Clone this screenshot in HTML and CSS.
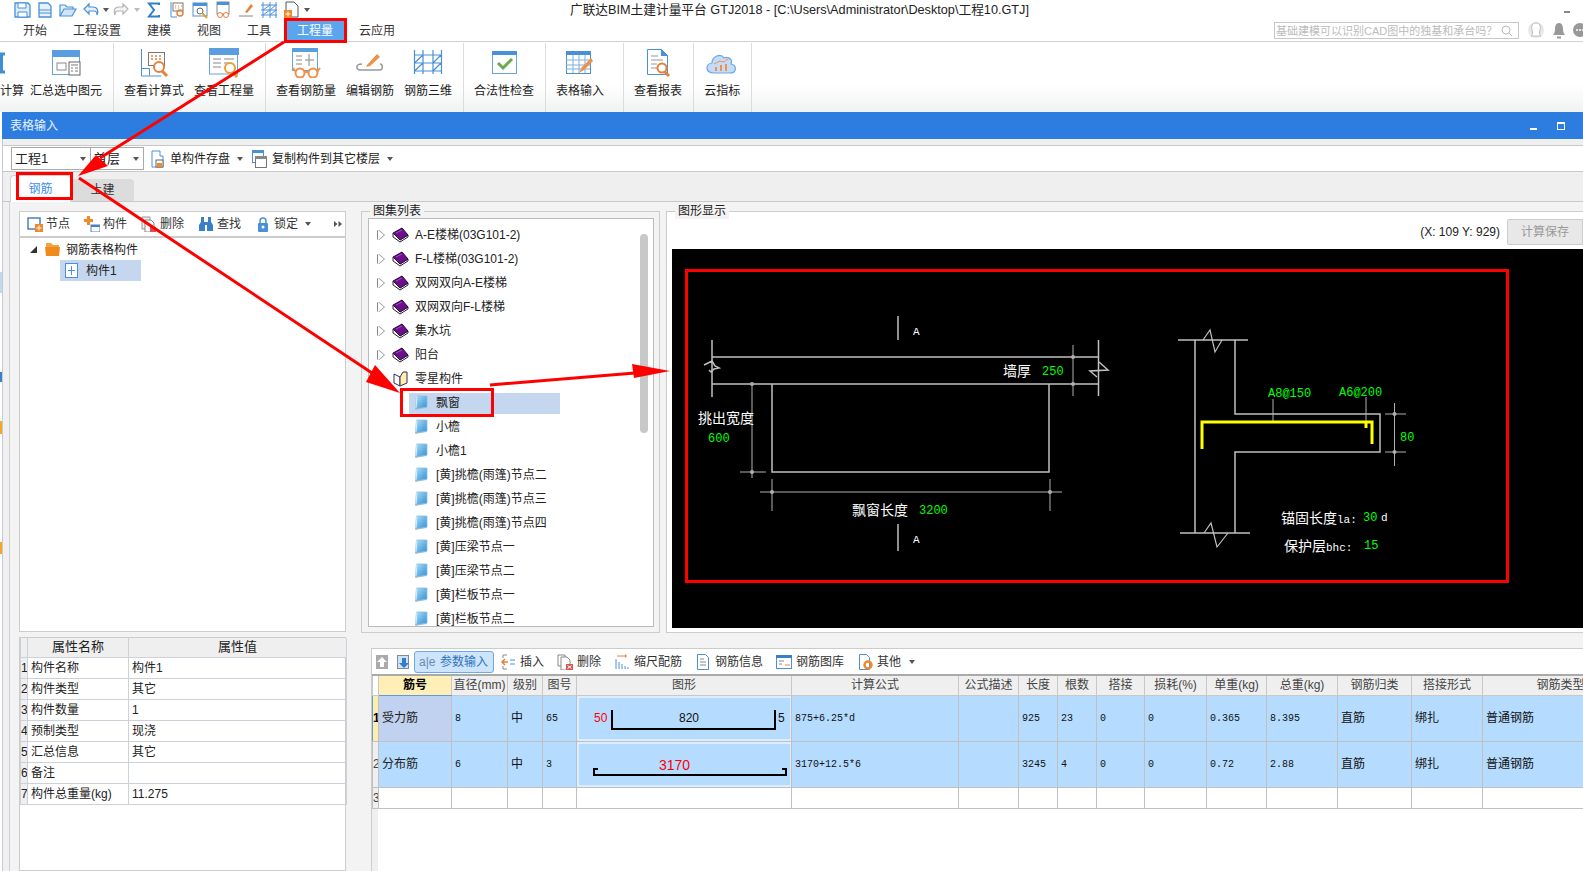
FILE: index.html
```html
<!DOCTYPE html>
<html lang="zh-CN">
<head>
<meta charset="utf-8">
<title>广联达BIM土建计量平台 GTJ2018</title>
<link rel="stylesheet" href="styles.css">
</head>
<body>
<svg class="defs" width="0" height="0" aria-hidden="true">
  <defs>
    <linearGradient id="leafGrad" x1="0" y1="0" x2="1" y2="1"><stop offset="0" stop-color="#a8ddf6"/><stop offset="1" stop-color="#2f8fd8"/></linearGradient>
    <symbol id="book" viewBox="0 0 17 16"><path d="M1 6v4l7 5 8-5V8L8 13z" fill="#fff" stroke="#222"/><path d="M1 6 10 1l6 7-8 5z" fill="#6b0f8c" stroke="#2e0640"/><path d="M4 6 10 3" stroke="#a050c0" fill="none"/></symbol>
    <symbol id="openbook" viewBox="0 0 17 16"><path d="M2 3 8 6v9L2 12z" fill="#fff" stroke="#3a2a55"/><path d="M8 6l3-5h4v11l-7 3z" fill="#fdf0b0" stroke="#3a2a55"/></symbol>
    <symbol id="leaf" viewBox="0 0 14 16"><path d="M1 15 13 13V11L2 13z" fill="#b8c8d0"/><path d="M2.500 1H13v11L1.500 14z" fill="url(#leafGrad)" stroke="#8fbcd8" stroke-width=".8"/><path d="M3 1 2 13" stroke="#d8f0fb" fill="none"/></symbol>
  </defs>
</svg>
<div class="app">
  <header class="topbar">
    <div class="qa-row">
      <div class="qa">
        <svg class="qa-ic" viewBox="0 0 18 18"><path d="M2 2h13l2 2v12H2z" fill="#dcecfa" stroke="#4a90d9" stroke-width="1.3"/><path d="M5 2h8v5H5zM5 11h9v5H5z" fill="#fff" stroke="#4a90d9"/></svg>
        <svg class="qa-ic" viewBox="0 0 18 18"><path d="M3 2h9l3 3v11H3z" fill="#e6f1fb" stroke="#4a90d9" stroke-width="1.3"/><path d="M3 9h12M3 12h12" stroke="#4a90d9"/></svg>
        <svg class="qa-ic" viewBox="0 0 18 18"><path d="M1 15V4h5l2 2h6v2" fill="#e6f1fb" stroke="#4a90d9" stroke-width="1.2"/><path d="M1 15 5 8h12l-4 7z" fill="#cfe4f8" stroke="#4a90d9" stroke-width="1.2"/></svg>
        <svg class="qa-ic" viewBox="0 0 18 18"><path d="M7 3 2 8l5 5v-3h5c2 0 3 1 3 4 2-5 0-8-4-8H7z" fill="#e6f1fb" stroke="#4a90d9" stroke-width="1.2"/></svg>
        <span class="caret qa-caret"></span>
        <svg class="qa-ic qa-near" viewBox="0 0 18 18"><path d="M11 3l5 5-5 5v-3H6c-2 0-3 1-3 4-2-5 0-8 4-8h4z" fill="#f4f4f4" stroke="#b5b5b5" stroke-width="1.2"/></svg>
        <span class="caret qa-caret qa-caret-off"></span>
        <svg class="qa-ic" viewBox="0 0 18 18"><path d="M14 4V2.500H4L9 9l-5 6.500h10V14" fill="none" stroke="#2f7fc8" stroke-width="2"/></svg>
        <svg class="qa-ic" viewBox="0 0 18 18"><path d="M3 1v15h6" fill="none" stroke="#4a90d9"/><rect x="5" y="2" width="10" height="8" fill="#fff" stroke="#777"/><path d="M7 5h1M10 5h1M13 5h1M7 7h1M10 7h1" stroke="#e8803c"/><circle cx="12" cy="12" r="3" fill="none" stroke="#e8803c" stroke-width="1.5"/></svg>
        <svg class="qa-ic" viewBox="0 0 18 18"><rect x="2" y="2" width="14" height="13" fill="#fff" stroke="#5a8fc0"/><path d="M2 3.500h14" stroke="#4a90d9" stroke-width="3"/><circle cx="9" cy="10" r="3" fill="none" stroke="#666"/><path d="M11 12l5 5" stroke="#e8a030" stroke-width="2"/></svg>
        <svg class="qa-ic" viewBox="0 0 18 18"><rect x="3" y="1" width="12" height="12" fill="#fff" stroke="#888"/><path d="M3 2.500h12" stroke="#4a90d9" stroke-width="3"/><circle cx="6" cy="14" r="2.500" fill="#fff" stroke="#e8803c"/><circle cx="12" cy="14" r="2.500" fill="#fff" stroke="#e8803c"/></svg>
        <svg class="qa-ic" viewBox="0 0 18 18"><path d="M8 11 14 3l2 2-6 7z" fill="#e8803c"/><path d="M2 15h14" stroke="#888"/></svg>
        <svg class="qa-ic" viewBox="0 0 18 18"><path d="M3 1v16M10 1v16M16 1v16M1 4h16M1 9h16M1 14h16M3 9l7-5M3 14l7-5M10 9l6-5M10 14l6-5" fill="none" stroke="#4a90d9"/></svg>
        <svg class="qa-ic" viewBox="0 0 18 18"><path d="M3 1h8l4 4v11H3z" fill="#fff" stroke="#555"/><rect x="1" y="9" width="8" height="8" fill="#ef8a2c"/><path d="M5 10.500v5M2.500 13h5" stroke="#fff"/></svg>
        <span class="caret qa-caret"></span>
      </div>
      <div class="app-title">广联达BIM土建计量平台 GTJ2018 - [C:\Users\Administrator\Desktop\工程10.GTJ]</div>
      <span class="app-min"></span>
    </div>
    <div class="menu-row">
      <nav class="menu">
        <span class="menu-item">开始</span>
        <span class="menu-item">工程设置</span>
        <span class="menu-item">建模</span>
        <span class="menu-item">视图</span>
        <span class="menu-item">工具</span>
        <span class="menu-item menu-active">工程量</span>
        <span class="menu-item">云应用</span>
      </nav>
      <div class="search">
        <span>基础建模可以识别CAD图中的独基和承台吗？</span>
        <svg class="search-ic" viewBox="0 0 12 12"><circle cx="5" cy="5" r="4" fill="none" stroke="#bbb"/><path d="M8 8l3 3" stroke="#bbb"/></svg>
      </div>
      <svg class="user-ic" viewBox="0 0 18 20"><circle cx="9" cy="9" r="8" fill="#e9e9e9"/><path d="M9 2c-4 0-5 3-4 7 1 3 1 4-1 6h10c-2-2-2-3-1-6 1-4 0-7-4-7z" fill="#fff" stroke="#bbb"/></svg>
      <svg class="bell-ic" viewBox="0 0 14 18"><path d="M7 1c-3 0-4 3-4 6 0 3-1 5-2 6h12c-1-1-2-3-2-6 0-3-1-6-4-6z" fill="#999"/><rect x="5" y="14.500" width="4" height="2" fill="#999"/></svg>
      <svg class="chat-ic" viewBox="0 0 16 16"><circle cx="8" cy="7" r="7" fill="#999"/><circle cx="5" cy="7" r="1" fill="#fff"/><circle cx="8" cy="7" r="1" fill="#fff"/><circle cx="11" cy="7" r="1" fill="#fff"/></svg>
    </div>
  </header>

  <section class="ribbon">
    <div class="rb-group">
      <div class="rb-item rb-cut">
        <svg class="rb-ic rb-ic-cut" viewBox="0 0 32 30"><path d="M9 6H5.500v18H9" fill="none" stroke="#3f8fd8" stroke-width="3"/></svg>
        <span class="rb-label">计算</span>
      </div>
      <div class="rb-item">
        <svg class="rb-ic" viewBox="0 0 32 30"><rect x="2.500" y="2.500" width="27" height="24" fill="#fff" stroke="#6aa3dc"/><rect x="2" y="2" width="28" height="7" fill="#5b9ee0"/><rect x="7" y="15" width="9" height="7" fill="none" stroke="#8a8a8a"/><rect x="19" y="14" width="11" height="13" fill="#fff" stroke="#666"/><path d="M21 17h7M21 20h2M25 20h3M21 23h2M25 23h3" stroke="#777"/></svg>
        <span class="rb-label">汇总选中图元</span>
      </div>
    </div>
    <div class="rb-group">
      <div class="rb-item">
        <svg class="rb-ic" viewBox="0 0 32 30"><path d="M3.500 1v27h20M3.500 20.500h8v7" fill="none" stroke="#4a90d9"/><rect x="10.500" y="4.500" width="16" height="13" fill="#fff" stroke="#777"/><path d="M13 8h2M17 8h2M21 8h2M13 11h2M17 11h2M21 11h2" stroke="#e8803c" stroke-width="1.500"/><circle cx="21" cy="19" r="5" fill="#fff" stroke="#e8803c" stroke-width="2"/><path d="M24 23l5 5" stroke="#e8803c" stroke-width="3"/></svg>
        <span class="rb-label">查看计算式</span>
      </div>
      <div class="rb-item">
        <svg class="rb-ic" viewBox="0 0 32 30"><rect x="1.500" y="1" width="28" height="25" fill="#fff" stroke="#6aa3dc"/><rect x="1" y="0" width="30" height="7" fill="#5b9ee0"/><path d="M5 11h8M5 15h8M5 19h8M16 11h10M16 15h4" stroke="#888"/><circle cx="22" cy="20" r="5" fill="#fff" stroke="#e8a030" stroke-width="2"/><path d="M25 24l4 5" stroke="#e8a030" stroke-width="3"/></svg>
        <span class="rb-label">查看工程量</span>
      </div>
    </div>
    <div class="rb-group">
      <div class="rb-item">
        <svg class="rb-ic" viewBox="0 0 32 30"><rect x="2.500" y="0.500" width="25" height="22" fill="#fff" stroke="#6aa3dc"/><rect x="2" y="0" width="26" height="4" fill="#5b9ee0"/><path d="M6 8h6M6 12h6M6 16h6M19 6v12M15 12h9" stroke="#888" fill="none"/><circle cx="10" cy="25" r="4.500" fill="#fff" stroke="#f0904a" stroke-width="2"/><circle cx="23" cy="25" r="4.500" fill="#fff" stroke="#f0904a" stroke-width="2"/><path d="M14 24h5M6 24 3 20M27 24l3-4" stroke="#f0904a" stroke-width="2"/></svg>
        <span class="rb-label">查看钢筋量</span>
      </div>
      <div class="rb-item">
        <svg class="rb-ic" viewBox="0 0 32 30"><path d="M8 16c-7 0-6 6-2 6h20c3 0 3-6 0-6" fill="none" stroke="#999" stroke-width="1.500"/><path d="M13 17l10-11 3 3-10 9-4 1z" fill="#f0904a"/></svg>
        <span class="rb-label">编辑钢筋</span>
      </div>
      <div class="rb-item">
        <svg class="rb-ic" viewBox="0 0 32 30"><path d="M2.500 2v24M29.500 2v24M11 2v24M21 2v24M2 7h28M2 15h28M2 23h28M2.500 15 11 7M21 15l8-8M2.500 23 11 15M21 23l8-8" fill="none" stroke="#4a90d9" stroke-width="1.200"/></svg>
        <span class="rb-label">钢筋三维</span>
      </div>
    </div>
    <div class="rb-group">
      <div class="rb-item">
        <svg class="rb-ic" viewBox="0 0 32 30"><rect x="4.500" y="3.500" width="24" height="22" fill="#fff" stroke="#6aa3dc"/><rect x="4" y="3" width="25" height="4" fill="#4a90d9"/><path d="M10 15l5 5 9-9" fill="none" stroke="#6aa84f" stroke-width="3"/></svg>
        <span class="rb-label">合法性检查</span>
      </div>
    </div>
    <div class="rb-group rb-group-wide">
      <div class="rb-item">
        <svg class="rb-ic" viewBox="0 0 32 30"><rect x="2.500" y="3.500" width="24" height="22" fill="#fff" stroke="#4a90d9"/><rect x="2" y="3" width="25" height="4" fill="#4a90d9"/><path d="M2 12h24M2 17h24M2 21h24M9 7v18M15 7v18M21 7v18" stroke="#7fb0e0"/><path d="M15 25l3-6 9-9 2 3-9 9z" fill="#f0904a"/></svg>
        <span class="rb-label">表格输入</span>
      </div>
    </div>
    <div class="rb-group">
      <div class="rb-item">
        <svg class="rb-ic" viewBox="0 0 32 30"><path d="M5.500 1.500h14l6 6v19h-20z" fill="#fff" stroke="#4a90d9"/><path d="M19 1l7 7h-7z" fill="#4a90d9"/><path d="M9 8h7M9 12h12M9 16h6M9 20h6" stroke="#999"/><circle cx="20" cy="20" r="4.500" fill="#fff" stroke="#e8803c" stroke-width="2"/><path d="M23 24l4 4" stroke="#e8803c" stroke-width="3"/></svg>
        <span class="rb-label">查看报表</span>
      </div>
    </div>
    <div class="rb-group">
      <div class="rb-item">
        <svg class="rb-ic" viewBox="0 0 32 30"><path d="M8 25c-9 0-9-9-2-10 0-7 9-10 12-5 5-2 9 2 7 6 6 1 6 9-1 9z" fill="#c4dcf6" stroke="#6aa8e8" stroke-width="1.200"/><path d="M10 23v-4M15 23v-6M20 23v-7" stroke="#f0904a" stroke-width="2"/><path d="M8 16l6-3 4 1 5-4" fill="none" stroke="#f0904a"/></svg>
        <span class="rb-label">云指标</span>
      </div>
    </div>
  </section>

  <div class="desk">
    <div class="strip"><i class="bit bit-a"></i><i class="bit bit-b"></i><i class="bit bit-c"></i><i class="bit bit-d"></i></div>
    <main class="window">
      <div class="win-title">
        <span>表格输入</span>
        <div class="win-btns"><i class="wb-min"></i><i class="wb-max"></i><i class="wb-close"></i></div>
      </div>
      <div class="win-gap"></div>
      <div class="toolbar">
        <div class="combo combo-a"><span>工程1</span><i class="caret"></i></div>
        <div class="combo combo-b"><span>首层</span><i class="caret"></i></div>
        <svg class="tb-ic tb-ic-a" viewBox="0 0 13 18"><path d="M1 1h8v5h3v11H1z" fill="#fff" stroke="#4a90d9"/><rect x="5" y="10" width="7" height="7" fill="#fff" stroke="#666"/><rect x="6" y="13" width="5" height="4" fill="#ef8a2c"/></svg>
        <span class="tb-text">单构件存盘</span><i class="caret tb-caret"></i>
        <svg class="tb-ic tb-ic-b" viewBox="0 0 15 18"><rect x="0.500" y="0.500" width="11" height="12" fill="#fff" stroke="#4a90d9"/><rect x="0" y="0" width="12" height="3" fill="#4a90d9"/><rect x="3.500" y="6.500" width="11" height="11" fill="#fff" stroke="#777"/><rect x="3" y="6" width="12" height="3" fill="#888"/></svg>
        <span class="tb-text">复制构件到其它楼层</span><i class="caret tb-caret"></i>
      </div>
      <div class="tabs">
        <span class="tab tab-on">钢筋</span>
        <span class="tab tab-off">土建</span>
      </div>
      <div class="work">
        <aside class="left">
          <div class="tree-panel">
            <div class="ltool">
              <span class="lt"><svg class="lt-ic" viewBox="0 0 16 16"><rect x="1" y="2" width="12" height="11" fill="#fff" stroke="#4a80c0" stroke-width="1.500"/><rect x="8" y="8" width="8" height="8" fill="#ef8a2c"/><path d="M12 9.500v5M9.500 12h5" stroke="#fff"/></svg>节点</span>
              <span class="lt"><svg class="lt-ic" viewBox="0 0 16 16"><path d="M3 0h3v3h3v3H6v3H3V6H0V3h3z" fill="#ef8a2c"/><rect x="7" y="9" width="9" height="7" fill="#fff" stroke="#4a80c0"/><rect x="7" y="9" width="9" height="2" fill="#4a80c0"/></svg>构件</span>
              <span class="lt"><svg class="lt-ic" viewBox="0 0 16 16"><path d="M1 1h8v12H1z" fill="#eee" stroke="#999"/><path d="M4 4h6l3 3v9H4z" fill="#fff" stroke="#888"/><rect x="9" y="11" width="6" height="5" fill="#d9534f"/></svg>删除</span>
              <span class="lt"><svg class="lt-ic" viewBox="0 0 16 16"><path d="M3 1h3v5h4V1h3v5l2 3v6h-6V9H7v6H1V9l2-3z" fill="#3a7fc8"/></svg>查找</span>
              <span class="lt"><svg class="lt-ic" viewBox="0 0 16 16"><path d="M5 7V5c0-4 6-4 6 0v2" fill="none" stroke="#4a90d9" stroke-width="1.500"/><rect x="3" y="7" width="10" height="9" rx="1" fill="#4a90d9"/><circle cx="8" cy="11" r="1.500" fill="#fff"/></svg>锁定</span>
              <i class="caret lt-caret"></i>
              <svg class="lt-more" viewBox="0 0 8 8"><path d="M0 1l3.500 3L0 7zM4.500 1 8 4 4.500 7z" fill="#555"/></svg>
            </div>
            <div class="tree">
              <div class="tree-row">
                <i class="tri-black"></i>
                <svg class="folder" viewBox="0 0 15 15"><path d="M1 1h5l2 2h6v11H1z" fill="#f5a142"/><path d="M0 5h15l-1 9H1z" fill="#f08a1c"/></svg>
                <span>钢筋表格构件</span>
              </div>
              <div class="tree-child">
                <svg class="node-ic" viewBox="0 0 13 15"><rect x="0.500" y="0.500" width="12" height="14" fill="#fff" stroke="#4a90d9"/><path d="M6.500 3v9M3 7.500h7" stroke="#4a90d9"/></svg>
                <span>构件1</span>
              </div>
            </div>
          </div>
          <div class="props">
            <table class="ptable">
              <colgroup><col class="p0"><col class="p1"><col class="p2"></colgroup>
              <thead><tr><th></th><th>属性名称</th><th>属性值</th></tr></thead>
              <tbody>
                <tr><td class="pi">1</td><td>构件名称</td><td>构件1</td></tr>
                <tr><td class="pi">2</td><td>构件类型</td><td>其它</td></tr>
                <tr><td class="pi">3</td><td>构件数量</td><td>1</td></tr>
                <tr><td class="pi">4</td><td>预制类型</td><td>现浇</td></tr>
                <tr><td class="pi">5</td><td>汇总信息</td><td>其它</td></tr>
                <tr><td class="pi">6</td><td>备注</td><td></td></tr>
                <tr><td class="pi">7</td><td>构件总重量(kg)</td><td>11.275</td></tr>
              </tbody>
            </table>
          </div>
        </aside>
        <div class="right">
          <div class="upper">
            <section class="group group-list">
              <span class="legend">图集列表</span>
              <div class="list">
                <div class="row"><i class="tri"></i><svg class="bk"><use href="#book"/></svg><span>A-E楼梯(03G101-2)</span></div>
                <div class="row"><i class="tri"></i><svg class="bk"><use href="#book"/></svg><span>F-L楼梯(03G101-2)</span></div>
                <div class="row"><i class="tri"></i><svg class="bk"><use href="#book"/></svg><span>双网双向A-E楼梯</span></div>
                <div class="row"><i class="tri"></i><svg class="bk"><use href="#book"/></svg><span>双网双向F-L楼梯</span></div>
                <div class="row"><i class="tri"></i><svg class="bk"><use href="#book"/></svg><span>集水坑</span></div>
                <div class="row"><i class="tri"></i><svg class="bk"><use href="#book"/></svg><span>阳台</span></div>
                <div class="row"><i class="tri tri-hide"></i><svg class="bk"><use href="#openbook"/></svg><span>零星构件</span></div>
                <div class="row"><div class="leaf leaf-on"><svg class="lf"><use href="#leaf"/></svg><span>飘窗</span></div></div>
                <div class="row"><div class="leaf"><svg class="lf"><use href="#leaf"/></svg><span>小檐</span></div></div>
                <div class="row"><div class="leaf"><svg class="lf"><use href="#leaf"/></svg><span>小檐1</span></div></div>
                <div class="row"><div class="leaf"><svg class="lf"><use href="#leaf"/></svg><span>[黄]挑檐(雨篷)节点二</span></div></div>
                <div class="row"><div class="leaf"><svg class="lf"><use href="#leaf"/></svg><span>[黄]挑檐(雨篷)节点三</span></div></div>
                <div class="row"><div class="leaf"><svg class="lf"><use href="#leaf"/></svg><span>[黄]挑檐(雨篷)节点四</span></div></div>
                <div class="row"><div class="leaf"><svg class="lf"><use href="#leaf"/></svg><span>[黄]压梁节点一</span></div></div>
                <div class="row"><div class="leaf"><svg class="lf"><use href="#leaf"/></svg><span>[黄]压梁节点二</span></div></div>
                <div class="row"><div class="leaf"><svg class="lf"><use href="#leaf"/></svg><span>[黄]栏板节点一</span></div></div>
                <div class="row"><div class="leaf"><svg class="lf"><use href="#leaf"/></svg><span>[黄]栏板节点二</span></div></div>
                <i class="scroll"></i>
              </div>
            </section>
            <section class="group group-graph">
              <span class="legend">图形显示</span>
              <div class="coords">
                <span>(X: 109 Y: 929)</span>
                <span class="calc-btn">计算保存</span>
              </div>
              <svg class="canvas" viewBox="672 249 911 379" width="911" height="379">
                <g fill="none" stroke="#c0c0c0" stroke-width="1.500">
                  <path d="M898 316v24M898 524v27M712 340v57M1098.500 340v56M712 357h387M712 384h387M772 384v88h277v-88"/>
                  <path d="M704 365l8-4 3 5 4 2-5 1-3 3-2-2M1099 362l9 8-18 1 7 6"/>
                  <path d="M1178 340h70M1180 533h70M1195 340v193M1235 340v74h145v38h-145v81"/>
                  <path d="M1203 340l7-10 5 22 7-12M1204 533l7-10 6 24 11-14" stroke-width="1.200"/>
                </g>
                <g fill="none" stroke="#b0b0b0">
                  <path d="M1073 345v51M752 384v94M740 472h26M760 492h302M772 479v32M1050 479v32M1394.500 403v63M1385 414h21M1385 452h21M1273 399v23M1366 397v25"/>
                </g>
                <g fill="#b0b0b0">
                  <circle cx="1073" cy="357" r="2"/><circle cx="1073" cy="384" r="2"/><circle cx="752" cy="384" r="2"/><circle cx="752" cy="472" r="2"/><circle cx="772" cy="492" r="2"/><circle cx="1050" cy="492" r="2"/><circle cx="1394.500" cy="414" r="2"/><circle cx="1394.500" cy="452" r="2"/>
                </g>
                <path d="M1202 449v-27h170v22M1366 422v6" fill="none" stroke="#ffff00" stroke-width="3"/>
                <g class="cad-w">
                  <text x="913" y="335">A</text><text x="913" y="543">A</text>
                  <text class="cad-cn" x="1003" y="376">墙厚</text>
                  <text class="cad-cn" x="698" y="423">挑出宽度</text>
                  <text class="cad-cn" x="852" y="515">飘窗长度</text>
                  <text class="cad-cn" x="1281" y="523">锚固长度<tspan class="cad-la">la:</tspan></text>
                  <text class="cad-cn" x="1284" y="551">保护层<tspan class="cad-la">bhc:</tspan></text>
                  <text x="1381" y="521">d</text>
                </g>
                <g class="cad-g">
                  <text x="1042" y="375">250</text><text x="708" y="442">600</text><text x="919" y="514">3200</text>
                  <text x="1268" y="397">A8@150</text><text x="1339" y="396">A6@200</text><text x="1400" y="441">80</text>
                  <text x="1363" y="521">30</text><text x="1364" y="549">15</text>
                </g>
              </svg>
            </section>
          </div>
          <section class="bottom">
            <div class="btool">
              <span class="sq sq-off"><svg viewBox="0 0 12 14"><path d="M6 2 1 7h3v5h4V7h3z" fill="#fff"/></svg></span>
              <span class="sq sq-on"><svg viewBox="0 0 12 14"><path d="M6 12 1 7h3V2h4v5h3z" fill="#2f7fd0"/></svg></span>
              <span class="param"><span class="param-ic">a|e</span>参数输入</span>
              <span class="bt bt-first"><svg class="bt-ic" viewBox="0 0 16 16"><path d="M3 1h4M3 15h4M3 1v3M3 12v3" stroke="#888" fill="none"/><path d="M8 8H2m3-3L2 8l3 3" fill="none" stroke="#e8803c" stroke-width="1.500"/><path d="M10 6h5M10 10h5" stroke="#4a90d9"/></svg>插入</span>
              <span class="bt"><svg class="bt-ic" viewBox="0 0 16 16"><path d="M1 1h7v11H1z" fill="#fff" stroke="#888"/><path d="M4 3h6l3 3v10H4z" fill="#fff" stroke="#888"/><rect x="9" y="10" width="7" height="6" fill="#d9534f"/><path d="M10.500 11.500l4 3m0-3l-4 3" stroke="#fff"/></svg>删除</span>
              <span class="bt"><svg class="bt-ic" viewBox="0 0 16 16"><path d="M3 2h9" stroke="#e8803c"/><path d="M11 0l2 2-2 2z" fill="#e8803c"/><path d="M2 5v10M5 8v7M8 10v5M11 12v3M14 13v2" stroke="#4a90d9"/></svg>缩尺配筋</span>
              <span class="bt"><svg class="bt-ic" viewBox="0 0 16 16"><path d="M2.500 .5h8l3 3v12h-11z" fill="#fff" stroke="#4a90d9"/><path d="M5 5h4M5 8h6M5 11h6" stroke="#888"/></svg>钢筋信息</span>
              <span class="bt"><svg class="bt-ic" viewBox="0 0 16 16"><rect x="0.500" y="1.500" width="15" height="13" fill="#fff" stroke="#4a90d9"/><rect x="0" y="1" width="16" height="3" fill="#3a7fc8"/><path d="M3 7h5M3 10h3" stroke="#888"/><path d="M9 11h5" stroke="#e8803c"/></svg>钢筋图库</span>
              <span class="bt"><svg class="bt-ic" viewBox="0 0 16 16"><path d="M2.500 .5h7l3 3v12h-10z" fill="#fff" stroke="#4a90d9"/><circle cx="11" cy="11" r="3.500" fill="none" stroke="#ef8a2c" stroke-width="2.500"/></svg>其他</span>
              <i class="caret bt-caret"></i>
            </div>
            <div class="grid-wrap">
              <table class="grid">
                <colgroup><col class="c0"><col class="c1"><col class="c2"><col class="c3"><col class="c4"><col class="c5"><col class="c6"><col class="c7"><col class="c8"><col class="c9"><col class="c10"><col class="c11"><col class="c12"><col class="c13"><col class="c14"><col class="c15"><col class="c16"></colgroup>
                <thead>
                  <tr>
                    <th class="corner"></th><th class="th-on">筋号</th><th>直径(mm)</th><th>级别</th><th>图号</th><th>图形</th><th>计算公式</th><th>公式描述</th><th>长度</th><th>根数</th><th>搭接</th><th>损耗(%)</th><th>单重(kg)</th><th>总重(kg)</th><th>钢筋归类</th><th>搭接形式</th><th>钢筋类型</th>
                  </tr>
                </thead>
                <tbody>
                  <tr class="tall">
                    <td class="idx idx-on">1</td><td class="name name-on">受力筋</td><td class="num">8</td><td class="cn">中</td><td class="num">65</td>
                    <td class="shape"><svg class="shape-svg" viewBox="0 0 215 45" width="215" height="45"><rect x="1" y="1" width="213" height="43" fill="none" stroke="#fff"/><path d="M35 14v19h163V14" fill="none" stroke="#000" stroke-width="2"/><text class="sh-r" x="17" y="26">50</text><text class="sh-k" x="102" y="26">820</text><text class="sh-k" x="201" y="26">5</text></svg></td>
                    <td class="num">875+6.25*d</td><td></td><td class="num">925</td><td class="num">23</td><td class="num">0</td><td class="num">0</td><td class="num">0.365</td><td class="num">8.395</td><td class="cn">直筋</td><td class="cn">绑扎</td><td class="cn">普通钢筋</td>
                  </tr>
                  <tr class="tall">
                    <td class="idx">2</td><td class="name">分布筋</td><td class="num">6</td><td class="cn">中</td><td class="num">3</td>
                    <td class="shape"><svg class="shape-svg" viewBox="0 0 215 45" width="215" height="45"><rect x="1" y="1" width="213" height="43" fill="none" stroke="#fff"/><path d="M21 27h-4v6h192v-6h-4" fill="none" stroke="#000" stroke-width="2"/><text class="sh-r sh-big" x="82" y="28">3170</text></svg></td>
                    <td class="num">3170+12.5*6</td><td></td><td class="num">3245</td><td class="num">4</td><td class="num">0</td><td class="num">0</td><td class="num">0.72</td><td class="num">2.88</td><td class="cn">直筋</td><td class="cn">绑扎</td><td class="cn">普通钢筋</td>
                  </tr>
                  <tr class="blank">
                    <td class="idx">3</td><td></td><td></td><td></td><td></td><td></td><td></td><td></td><td></td><td></td><td></td><td></td><td></td><td></td><td></td><td></td><td></td>
                  </tr>
                </tbody>
              </table>
            </div>
          </section>
        </div>
      </div>
    </main>
  </div>

  <svg class="overlay" viewBox="0 0 1583 871" width="1583" height="871" aria-hidden="true">
    <g fill="none" stroke="#ff0000" stroke-width="3">
      <rect x="285.500" y="19.500" width="60" height="22"/>
      <rect x="17.500" y="173.500" width="54" height="25"/>
      <rect x="401.500" y="389.500" width="91" height="26"/>
      <rect x="686.500" y="270.500" width="821" height="311"/>
      <path d="M284 42 100 158M79 178 375 375M490 385l145-12"/>
    </g>
    <g fill="#ff0000">
      <path d="M78 176 96 155 108 166z"/>
      <path d="M400 393 375 365 366 382z"/>
      <path d="M670 371 632 364 634 378z"/>
    </g>
  </svg>
</div>
</body>
</html>
```

FILE: styles.css
```css
* { box-sizing: border-box; }
html, body { margin: 0; padding: 0; height: 100%; overflow: hidden; background: #fff; }
.defs { position: absolute; }
.app {
  position: relative; width: 1583px; height: 871px; overflow: hidden;
  display: flex; flex-direction: column;
  font: 12px/16px "Liberation Sans", "Noto Sans CJK SC", sans-serif; color: #222;
}
.caret { display: inline-block; width: 0; height: 0; border: 3px solid transparent; border-top: 4px solid #555; border-bottom: 0; }

/* top */
.topbar { height: 42px; border-bottom: 1px solid #d0d0d0; flex: none; }
.qa-row { height: 20px; display: flex; align-items: center; }
.qa { width: 570px; flex: none; padding-left: 13px; display: flex; align-items: center; gap: 5px; }
.qa-ic { width: 18px; height: 18px; flex: none; }
.qa-caret { margin-left: -2px; width: 6px; }
.qa-near { margin-left: -2px; }
.qa-caret-off { border-top-color: #bbb; margin-left: -1px; }
.app-title { white-space: nowrap; font-size: 12.7px; }
.app-min { width: 6px; height: 2px; background: #888; margin: 4px 13px 0 auto; }
.menu-row { height: 21px; display: flex; align-items: center; }
.menu { display: flex; flex: none; padding-left: 10px; height: 21px; }
.menu-item { flex: none; white-space: nowrap; padding: 3px 13px 0; height: 21px; color: #333; }
.menu-active { background: #5ba5ee; color: #fff; }
.search {
  margin-left: auto; width: 245px; height: 17px; border: 1px solid #c8c8c8; flex: none;
  display: flex; align-items: center; padding-left: 1px;
  font-size: 11px; color: #bbb; white-space: nowrap;
}
.search-ic { width: 12px; height: 12px; margin-left: auto; margin-right: 5px; flex: none; }
.user-ic { width: 18px; height: 20px; margin-left: 8px; flex: none; }
.bell-ic { width: 14px; height: 18px; margin-left: 7px; flex: none; }
.chat-ic { width: 16px; height: 16px; margin-left: 6px; margin-right: -5px; flex: none; }

/* ribbon */
.ribbon { height: 70px; display: flex; flex: none; background: linear-gradient(#fff 60%, #f1f3f2); }
.rb-group { display: flex; gap: 10px; padding: 5px 11px 0 10px; border-right: 1px solid #dcdcdc; margin-top: 1px; }
.rb-group:first-child { padding-left: 0; width: 114px; }
.rb-group-wide { padding-right: 19px; }
.rb-item { display: flex; flex-direction: column; align-items: center; }
.rb-cut { width: 24px; margin-right: -4px; }
.rb-ic { width: 32px; height: 30px; flex: none; }
.rb-ic-cut { margin: 0 -4px; }
.rb-label { margin-top: 5px; white-space: nowrap; color: #222; }

/* window */
.desk { flex: 1; display: flex; min-height: 0; }
.strip { width: 2px; position: relative; flex: none; background: #fff; }
.bit { position: absolute; left: 0; width: 2px; }
.bit-a { top: 160px; height: 21px; background: #c5d7ef; }
.bit-b { top: 260px; height: 10px; background: #3a7fc8; }
.bit-c { top: 309px; height: 13px; background: #f5a623; }
.bit-d { top: 430px; height: 12px; background: #f5a623; }
.window { flex: 1; display: flex; flex-direction: column; min-width: 0; background: #f0f0f0; border-left: 1px solid #c4cad4; }
.win-title { height: 27px; flex: none; background: #2d7de0; color: #e8f2ff; display: flex; align-items: center; margin-left: -1px; padding-left: 8px; }
.win-btns { margin-left: auto; display: flex; align-items: center; gap: 20px; margin-right: -8px; flex: none; }
.wb-min { width: 7px; height: 2px; background: #fff; margin-top: 6px; }
.wb-max { width: 8px; height: 8px; border: 1px solid #fff; border-top-width: 2px; }
.wb-close { width: 8px; height: 8px; margin-left: -2px; border-left: 2px solid #fff; }
.win-gap { height: 6px; flex: none; background: #efefef; }
.toolbar { height: 27px; flex: none; background: #fff; border-top: 1px solid #c8c8c8; border-bottom: 1px solid #c8c8c8; display: flex; align-items: center; padding-left: 8px; }
.combo { height: 23px; border: 1px solid #aaa; display: flex; align-items: center; justify-content: space-between; padding: 0 4px 0 3px; font-size: 13px; }
.combo-a { width: 80px; }
.combo-b { width: 54px; margin-left: -1px; }
.tb-ic { flex: none; }
.tb-ic-a { width: 13px; height: 18px; margin-left: 7px; margin-right: 6px; }
.tb-ic-b { width: 15px; height: 18px; margin-left: 9px; margin-right: 5px; }
.tb-text { white-space: nowrap; }
.tb-caret { margin-left: 7px; }
.tabs { height: 30px; flex: none; background: #efefef; border-bottom: 1px solid #c8c8c8; display: flex; align-items: flex-end; padding-left: 7px; }
.tab { display: flex; align-items: center; justify-content: center; }
.tab-on { width: 61px; height: 27px; background: #fff; color: #3d8ee8; border: 1px solid #d0d0d0; border-bottom: 0; border-radius: 4px 4px 0 0; margin-bottom: -1px; }
.tab-off { width: 63px; height: 22px; background: #dcdcdc; color: #333; border-radius: 0 4px 0 0; }

.work { flex: 1; min-height: 0; display: flex; padding: 9px 0 0 9px; background: #f3f3f3; border-left: 1px solid #d0d0d0; margin-left: 6px; }

/* left */
.left { width: 327px; flex: none; margin-right: 15px; display: flex; flex-direction: column; }
.tree-panel { height: 421px; flex: none; background: #fff; border: 1px solid #ccc; margin-bottom: 5px; }
.ltool { height: 26px; border-bottom: 2px solid #ccc; display: flex; align-items: center; padding-left: 7px; background: #fff; }
.lt { display: flex; align-items: center; gap: 3px; margin-right: 14px; color: #333; white-space: nowrap; }
.lt-ic { width: 16px; height: 16px; flex: none; }
.lt-caret { margin-left: -7px; }
.lt-more { margin-left: auto; margin-right: 3px; width: 8px; height: 8px; flex: none; }
.tree-row { height: 21px; display: flex; align-items: center; margin-top: 1px; }
.tri-black { width: 0; height: 0; margin-left: 10px; border-left: 7px solid transparent; border-bottom: 7px solid #333; }
.folder { width: 15px; height: 15px; margin-left: 8px; flex: none; }
.tree-row span { margin-left: 6px; }
.tree-child { margin-left: 40px; width: 81px; height: 21px; background: #c5d7ef; display: flex; align-items: center; padding-left: 5px; }
.node-ic { width: 13px; height: 15px; flex: none; }
.tree-child span { margin-left: 8px; }
.props { flex: 1; background: #fff; border: 1px solid #ccc; }
.ptable { border-collapse: collapse; table-layout: fixed; width: 326px; }
.p0 { width: 7px; } .p1 { width: 101px; } .p2 { width: 218px; }
.ptable th { height: 19px; padding: 0; font-weight: 400; background: #efefef; border: 1px solid #cdd2da; border-top: 0; color: #222; font-size: 13px; }
.ptable td { height: 21px; padding: 0 3px; border: 1px solid #cdd2da; white-space: nowrap; overflow: hidden; }
.ptable td.pi { padding: 0; background: #efefef; font-size: 12px; text-align: center; }

/* right */
.right { flex: 1; min-width: 0; display: flex; flex-direction: column; }
.upper { height: 422px; flex: none; display: flex; gap: 6px; }
.group { position: relative; border: 1px solid #ccc; background: #fff; }
.legend { position: absolute; top: -9px; left: 8px; background: #f3f3f3; padding: 0 3px; line-height: 16px; color: #222; }
.group-list { width: 299px; flex: none; padding: 6px 5px 5px 6px; background: #f3f3f3; }
.list { position: relative; height: 100%; background: #fff; border: 1px solid #bbb; padding-top: 4px; overflow: hidden; }
.row { height: 24px; display: flex; align-items: center; padding-left: 9px; white-space: nowrap; flex: none; }
.tri { width: 0; height: 0; border-left: 6px solid #fff; border-top: 5px solid transparent; border-bottom: 5px solid transparent; position: relative; flex: none; filter: drop-shadow(1px 0 0 #888) drop-shadow(-1px 0 0 #888); }
.tri-hide { visibility: hidden; }
.bk { width: 17px; height: 16px; margin: 0 6px 0 8px; flex: none; }
.leaf { margin-left: 31px; width: 151px; height: 21px; display: flex; align-items: center; padding-left: 5px; }
.leaf-on { background: #c5d7ef; }
.lf { width: 14px; height: 16px; margin-right: 8px; flex: none; }
.scroll { position: absolute; left: 271px; top: 15px; width: 8px; height: 199px; border-radius: 4px; background: #c8c8c8; }
.group-graph { flex: 1; min-width: 0; border-right: 0; padding-left: 5px; display: flex; flex-direction: column; }
.coords { height: 37px; flex: none; display: flex; align-items: center; justify-content: flex-end; padding-top: 3px; }
.calc-btn { width: 76px; height: 26px; margin-left: 7px; background: #e8e8e8; border: 1px solid #ccc; border-radius: 2px 0 0 2px; color: #999; display: flex; align-items: center; justify-content: center; }
.canvas { display: block; background: #000; flex: none; }
.cad-w text { fill: #fff; font: 11px "Liberation Mono", monospace; }
.cad-w .cad-cn { font: 14px "Liberation Mono", "Noto Sans CJK SC", monospace; }
.cad-w .cad-la { font-size: 11px; }
.cad-g text { fill: #00ff00; font: 12px "Liberation Mono", monospace; }

/* bottom */
.bottom { flex: 1; min-height: 0; margin: 15px 0 0 10px; border: 1px solid #ccc; border-right: 0; border-bottom: 0; display: flex; flex-direction: column; background: #fff; }
.btool { height: 25px; flex: none; display: flex; align-items: center; padding-left: 4px; white-space: nowrap; color: #333; }
.sq { width: 12px; height: 14px; flex: none; display: block; }
.sq svg { display: block; width: 12px; height: 14px; }
.sq-off { background: #aaa; }
.sq-on { background: #cfe3f7; border: 1px solid #888; margin-left: 9px; }
.param { width: 80px; height: 22px; margin-left: 5px; border: 1px solid #6aa9ee; border-radius: 3px; background: #cde4fb; color: #2f75c0; display: flex; align-items: center; padding-left: 4px; }
.param-ic { width: 21px; color: #6a8ab0; font: 12px "Liberation Sans", sans-serif; }
.bt { display: flex; align-items: center; gap: 4px; margin-left: 13px; }
.bt-first { margin-left: 6px; }
.bt-ic { width: 16px; height: 16px; flex: none; }
.bt-caret { margin-left: 8px; }
.grid-wrap { flex: 1; min-height: 0; overflow: hidden; border-top: 2px solid #aaa; background: linear-gradient(90deg, #efefef 6px, #fff 6px); }
.grid { border-collapse: collapse; table-layout: fixed; width: 1266px; }
.c0 { width: 6px; } .c1 { width: 73px; } .c2 { width: 56px; } .c3 { width: 35px; } .c4 { width: 34px; }
.c5 { width: 215px; } .c6 { width: 167px; } .c7 { width: 60px; } .c8 { width: 39px; } .c9 { width: 39px; }
.c10 { width: 48px; } .c11 { width: 62px; } .c12 { width: 60px; } .c13 { width: 71px; } .c14 { width: 74px; }
.c15 { width: 71px; } .c16 { width: 156px; }
.grid th { height: 19px; padding: 0; font-weight: 400; background: #efefef; color: #444; border: 1px solid #c8c8c8; border-top: 0; white-space: nowrap; overflow: hidden; }
.grid .corner { background: #fff; }
.grid .th-on { background: #ffeeb5; color: #000; font-weight: 700; border-bottom: 1px solid #5b9ee0; }
.grid td { padding: 0 3px; border: 1px solid #c0c0c0; white-space: nowrap; overflow: hidden; }
.tall td { height: 46px; background: #b5dcff; }
.blank td { height: 21px; background: #fff; }
.grid td.idx { padding: 0; background: #efefef; text-align: center; color: #444; }
.grid td.idx-on { background: #ffeeaa; color: #000; font-weight: 700; border-left: 1px solid #5b9ee0; }
.grid td.name-on { background: #c0d2ef; }
.grid td.shape { padding: 0; }
.shape-svg { display: block; }
.num { font: 10px "Liberation Mono", monospace; color: #111; }
.cn { color: #111; }
.sh-r { fill: #ff0000; font: 12px "Liberation Sans", sans-serif; }
.sh-big { font-size: 14px; }
.sh-k { fill: #111; font: 12px "Liberation Sans", sans-serif; }

/* annotations drawn over the screenshot */
.overlay { position: absolute; left: 0; top: 0; pointer-events: none; }
```
